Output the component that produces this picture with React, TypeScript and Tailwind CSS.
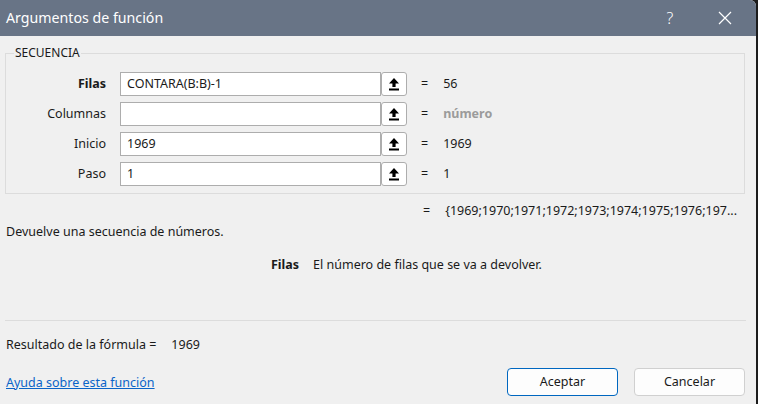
import React from "react";

const Up = () => (
  <svg width="12" height="14" viewBox="0 0 12 14">
    <path d="M6 1 L11 6.5 L7.6 6.5 L7.6 10 L4.4 10 L4.4 6.5 L1 6.5 Z" fill="#000" />
    <rect x="1" y="11.5" width="10" height="2" fill="#000" />
  </svg>
);

function Row({ label, value, result, bold, gray }: { label: string; value: string; result: string; bold?: boolean; gray?: boolean }) {
  return (
    <div className="flex items-center h-[24px]">
      <div className={`w-[100px] text-right text-[12.5px] ${bold ? "font-bold" : ""}`}>{label}</div>
      <div className="ml-[14px] w-[261px] h-[24px] border border-[#adadad] bg-white flex items-center px-[6px] text-[12.5px]">{value}</div>
      <div className="w-[26px] h-[24px] border border-[#adadad] rounded-[3px] bg-white flex items-center justify-center">
        <Up />
      </div>
      <div className="ml-[14px] text-[12.5px]">=</div>
      <div className={`ml-[15px] text-[12.5px] ${gray ? "font-bold text-[#9b9b9b]" : ""}`}>{result}</div>
    </div>
  );
}

export default function App() {
  return (
    <div className="w-[758px] h-[404px] bg-[#1c1c1c] flex" style={{ fontFamily: '"Noto Sans", sans-serif' }}>
      <div className="w-[756px] h-[404px] bg-[#f0f0f0] rounded-tr-[6px] overflow-hidden flex flex-col text-[#1a1a1a]">
        <div className="h-[36px] bg-[#687486] flex items-center pl-[6px] text-white">
          <div className="text-[14.2px] flex-1">Argumentos de función</div>
          <div className="text-[16px] w-[20px] mr-[38px] text-center font-light">?</div>
          <svg width="14" height="14" viewBox="0 0 14 14" className="mr-[24px]">
            <path d="M1 1 L13 13 M13 1 L1 13" stroke="#fff" strokeWidth="1.2" />
          </svg>
        </div>
        <div className="px-[5px] pt-[17px]">
          <div className="relative border border-[#dcdcdc] w-[740px] h-[141px] pt-[18px]">
            <div className="absolute left-[8px] top-[-9px] bg-[#f0f0f0] px-[1px] text-[12px] leading-[16px]">SECUENCIA</div>
            <div className="flex flex-col gap-[6px]">
              <Row label="Filas" value="CONTARA(B:B)-1" result="56" bold />
              <Row label="Columnas" value="" result="número" gray />
              <Row label="Inicio" value="1969" result="1969" />
              <Row label="Paso" value="1" result="1" />
            </div>
          </div>
          <div className="flex text-[12.5px] mt-[8px] h-[18px]">
            <div className="ml-[418px]">=</div>
            <div className="ml-[15px]">{"{1969;1970;1971;1972;1973;1974;1975;1976;197..."}</div>
          </div>
          <div className="text-[12.5px] mt-[3px] ml-[1px]">Devuelve una secuencia de números.</div>
          <div className="flex text-[12.5px] mt-[14px] ml-[266px]">
            <span className="font-bold">Filas</span>
            <span className="ml-[14px]">El número de filas que se va a devolver.</span>
          </div>
          <div className="mt-[45px] h-px bg-[#dcdcdc] w-[741px]" />
          <div className="flex text-[12.5px] mt-[15px] ml-[1px]">
            <span>Resultado de la fórmula =</span>
            <span className="ml-[15px]">1969</span>
          </div>
          <div className="flex items-center mt-[14px]">
            <a className="text-[12.5px] text-[#0a64c8] underline ml-[1px] flex-1 mt-[2px]">Ayuda sobre esta función</a>
            <button className="w-[111px] h-[28px] border border-[#0067c0] rounded-[4px] bg-[#fdfdfd] text-[12.5px]">Aceptar</button>
            <button className="ml-[16px] mr-[6px] w-[111px] h-[28px] border border-[#d0d0d0] rounded-[4px] bg-[#fdfdfd] text-[12.5px]">Cancelar</button>
          </div>
        </div>
      </div>
    </div>
  );
}
